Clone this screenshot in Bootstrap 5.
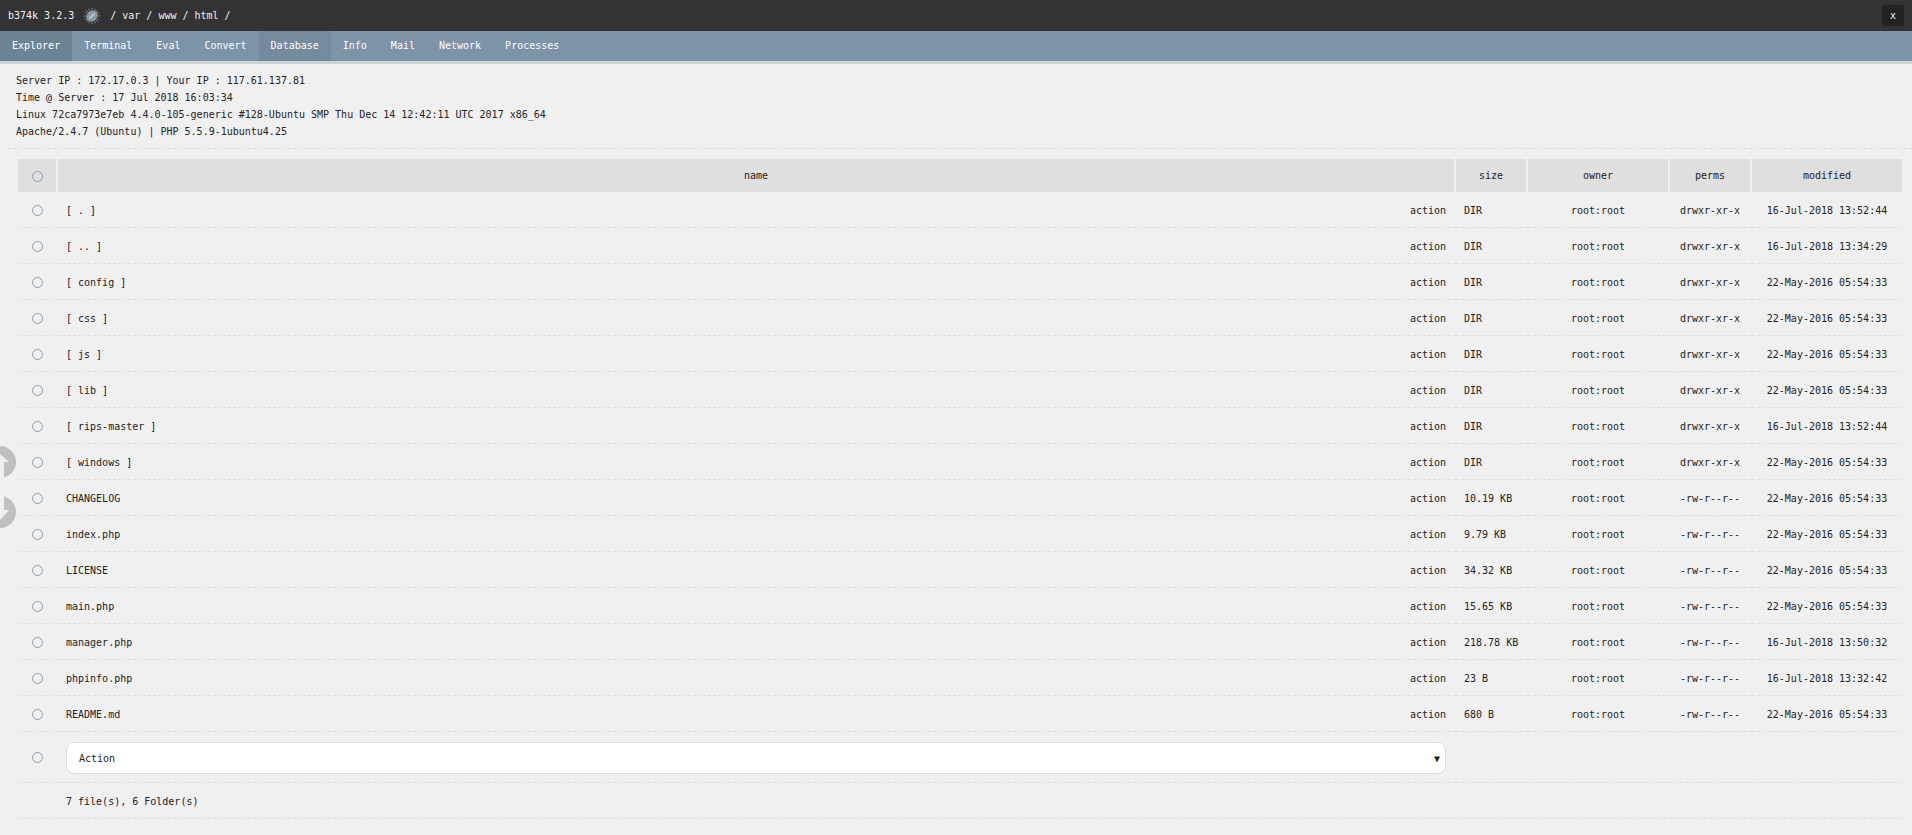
<!DOCTYPE html>
<html lang="en">
<head>
<meta charset="UTF-8">
<title>b374k 3.2.3</title>
<link href="https://cdn.jsdelivr.net/npm/bootstrap@5.3.3/dist/css/bootstrap.min.css" rel="stylesheet">
<style>
    html, body { height: 100%; }
    body {
        background: #f0f0f0;
        color: #222;
        font-family: "DejaVu Sans Mono", "Liberation Mono", monospace;
        font-size: 10px;
        line-height: 17px;
    }
    .topbar { height: 31px; background: #333; color: #f0f0f0; padding-left: 8px; }
    .bug { width: 16px; height: 16px; margin: 0 10px; }
    .closebtn {
        width: 22px; height: 21px; margin-right: 8px;
        background: #222; color: #f0f0f0; border-radius: 3px;
    }
    .mainnav { height: 33px; background: #7c93a8; border-bottom: 3px solid #ccd1d5; }
    .mainnav a { color: #fff; padding: 0 12px; line-height: 30px; height: 30px; text-decoration: none; }
    .mainnav a.on { background: #6d8394; }
    .mainnav a.hov { background: #758a9c; }
    .srvinfo { margin-left: 8px; padding: 8px 0 8px 8px; border-bottom: 1px dashed #ddd; height: 85px; }
    .filelist { padding: 10px 10px 0 18px; }
    .ftable { width: 100%; border-collapse: separate; border-spacing: 0; table-layout: fixed; }
    .ftable th {
        background: #dfdfdf; font-weight: normal; text-align: center;
        height: 33px; padding: 0; border-right: 2px solid #f0f0f0;
    }
    .ftable th:last-child { border-right: 0; }
    .ftable td { height: 36px; padding: 2px 8px 0; border-bottom: 1px dashed #ddd; }
    .ftable td.chk { padding: 0 2px 0 0; text-align: center; }
    .ftable td.namecell { padding-right: 10px; }
    .ftable td.mid { text-align: center; padding-right: 10px; }
    .ftable td.mid:last-child { padding-right: 8px; }
    .ftable tr.actionrow td { height: 51px; }
    .ring {
        display: inline-block; width: 11px; height: 11px; vertical-align: middle;
        border: 1px solid #8a9cae; border-radius: 50%;
    }
    .fakeselect {
        height: 32px; background: #fff; border: 1px solid #ddd; border-radius: 8px;
        padding: 1px 5px 0 12px;
    }
    .sidebtn {
        position: fixed; left: -16px; width: 32px; height: 32px;
        background: #c0c0c0; border-radius: 50%;
        overflow: hidden;
    }
    .sidebtn svg { display: block; }
    .sideup { top: 446px; }
    .sidedown { top: 496px; }
</style>
</head>
<body>

<div class="topbar d-flex align-items-center">
    <span>b374k 3.2.3</span>
    <svg class="bug" viewBox="0 0 16 16">
        <g stroke="#7b8790" stroke-width="1">
            <path d="M8 0v16M0 8h16M2.500 2.500l11 11M13.500 2.500l-11 11M4.500 .8l7 14.400M11.500 .8l-7 14.400M.8 4.500l14.400 7M15.200 4.500l-14.400 7"/>
        </g>
        <ellipse cx="8" cy="8" rx="6" ry="4.800" transform="rotate(-45 8 8)" fill="#8a9ca8"/>
        <path d="M4.800 10l5-5 1.300 1.300-5 5z" fill="#b9c7d0"/>
    </svg>
    <span>/ var / www / html /</span>
    <div class="closebtn d-flex align-items-center justify-content-center ms-auto">x</div>
</div>

<nav class="mainnav d-flex" id="mainnav"></nav>

<div class="srvinfo">
    Server IP : 172.17.0.3 | Your IP : 117.61.137.81<br>
    Time @ Server : 17 Jul 2018 16:03:34<br>
    Linux 72ca7973e7eb 4.4.0-105-generic #128-Ubuntu SMP Thu Dec 14 12:42:11 UTC 2017 x86_64<br>
    Apache/2.4.7 (Ubuntu) | PHP 5.5.9-1ubuntu4.25
</div>

<div class="filelist">
    <table class="ftable">
        <colgroup>
            <col style="width:40px"><col><col style="width:72px"><col style="width:142px"><col style="width:82px"><col style="width:150px">
        </colgroup>
        <thead>
            <tr>
                <th><span class="ring"></span></th>
                <th>name</th><th>size</th><th>owner</th><th>perms</th><th>modified</th>
            </tr>
        </thead>
        <tbody id="rows"></tbody>
    </table>
</div>

<div class="sidebtn sideup">
    <svg width="32" height="32" viewBox="0 0 32 32"><path d="M16 8l9 8h-5v16h-8V16H7z" fill="#f0f0f0"/></svg>
</div>
<div class="sidebtn sidedown">
    <svg width="32" height="32" viewBox="0 0 32 32"><path d="M12 0h8v14h5l-9 10-9-10h5z" fill="#f0f0f0"/></svg>
</div>

<script src="https://cdn.jsdelivr.net/npm/bootstrap@5.3.3/dist/js/bootstrap.bundle.min.js"></script>
<script>
    const navItems = ['Explorer', 'Terminal', 'Eval', 'Convert', 'Database', 'Info', 'Mail', 'Network', 'Processes'];
    document.getElementById('mainnav').innerHTML = navItems.map(n => {
        let c = n === 'Explorer' ? 'on' : (n === 'Database' ? 'hov' : '');
        return `<a href="#" class="${c}">${n}</a>`;
    }).join('');

    const d1 = '16-Jul-2018', d2 = '22-May-2016';
    const dx = 'drwxr-xr-x', rw = '-rw-r--r--';
    const files = [
        ['[ . ]', 'DIR', dx, d1 + ' 13:52:44'],
        ['[ .. ]', 'DIR', dx, d1 + ' 13:34:29'],
        ['[ config ]', 'DIR', dx, d2 + ' 05:54:33'],
        ['[ css ]', 'DIR', dx, d2 + ' 05:54:33'],
        ['[ js ]', 'DIR', dx, d2 + ' 05:54:33'],
        ['[ lib ]', 'DIR', dx, d2 + ' 05:54:33'],
        ['[ rips-master ]', 'DIR', dx, d1 + ' 13:52:44'],
        ['[ windows ]', 'DIR', dx, d2 + ' 05:54:33'],
        ['CHANGELOG', '10.19 KB', rw, d2 + ' 05:54:33'],
        ['index.php', '9.79 KB', rw, d2 + ' 05:54:33'],
        ['LICENSE', '34.32 KB', rw, d2 + ' 05:54:33'],
        ['main.php', '15.65 KB', rw, d2 + ' 05:54:33'],
        ['manager.php', '218.78 KB', rw, d1 + ' 13:50:32'],
        ['phpinfo.php', '23 B', rw, d1 + ' 13:32:42'],
        ['README.md', '680 B', rw, d2 + ' 05:54:33']
    ];

    let html = files.map(f => `<tr>
        <td class="chk"><span class="ring"></span></td>
        <td class="namecell"><div class="d-flex justify-content-between"><span>${f[0]}</span><span>action</span></div></td>
        <td>${f[1]}</td>
        <td class="mid">root:root</td>
        <td class="mid">${f[2]}</td>
        <td class="mid">${f[3]}</td>
    </tr>`).join('');

    html += `<tr class="actionrow">
        <td class="chk"><span class="ring"></span></td>
        <td class="namecell"><div class="fakeselect d-flex justify-content-between align-items-center"><span>Action</span><span>&#9660;</span></div></td>
        <td colspan="4"></td>
    </tr>
    <tr>
        <td></td>
        <td colspan="5">7 file(s), 6 Folder(s)</td>
    </tr>`;
    document.getElementById('rows').innerHTML = html;
</script>
</body>
</html>
